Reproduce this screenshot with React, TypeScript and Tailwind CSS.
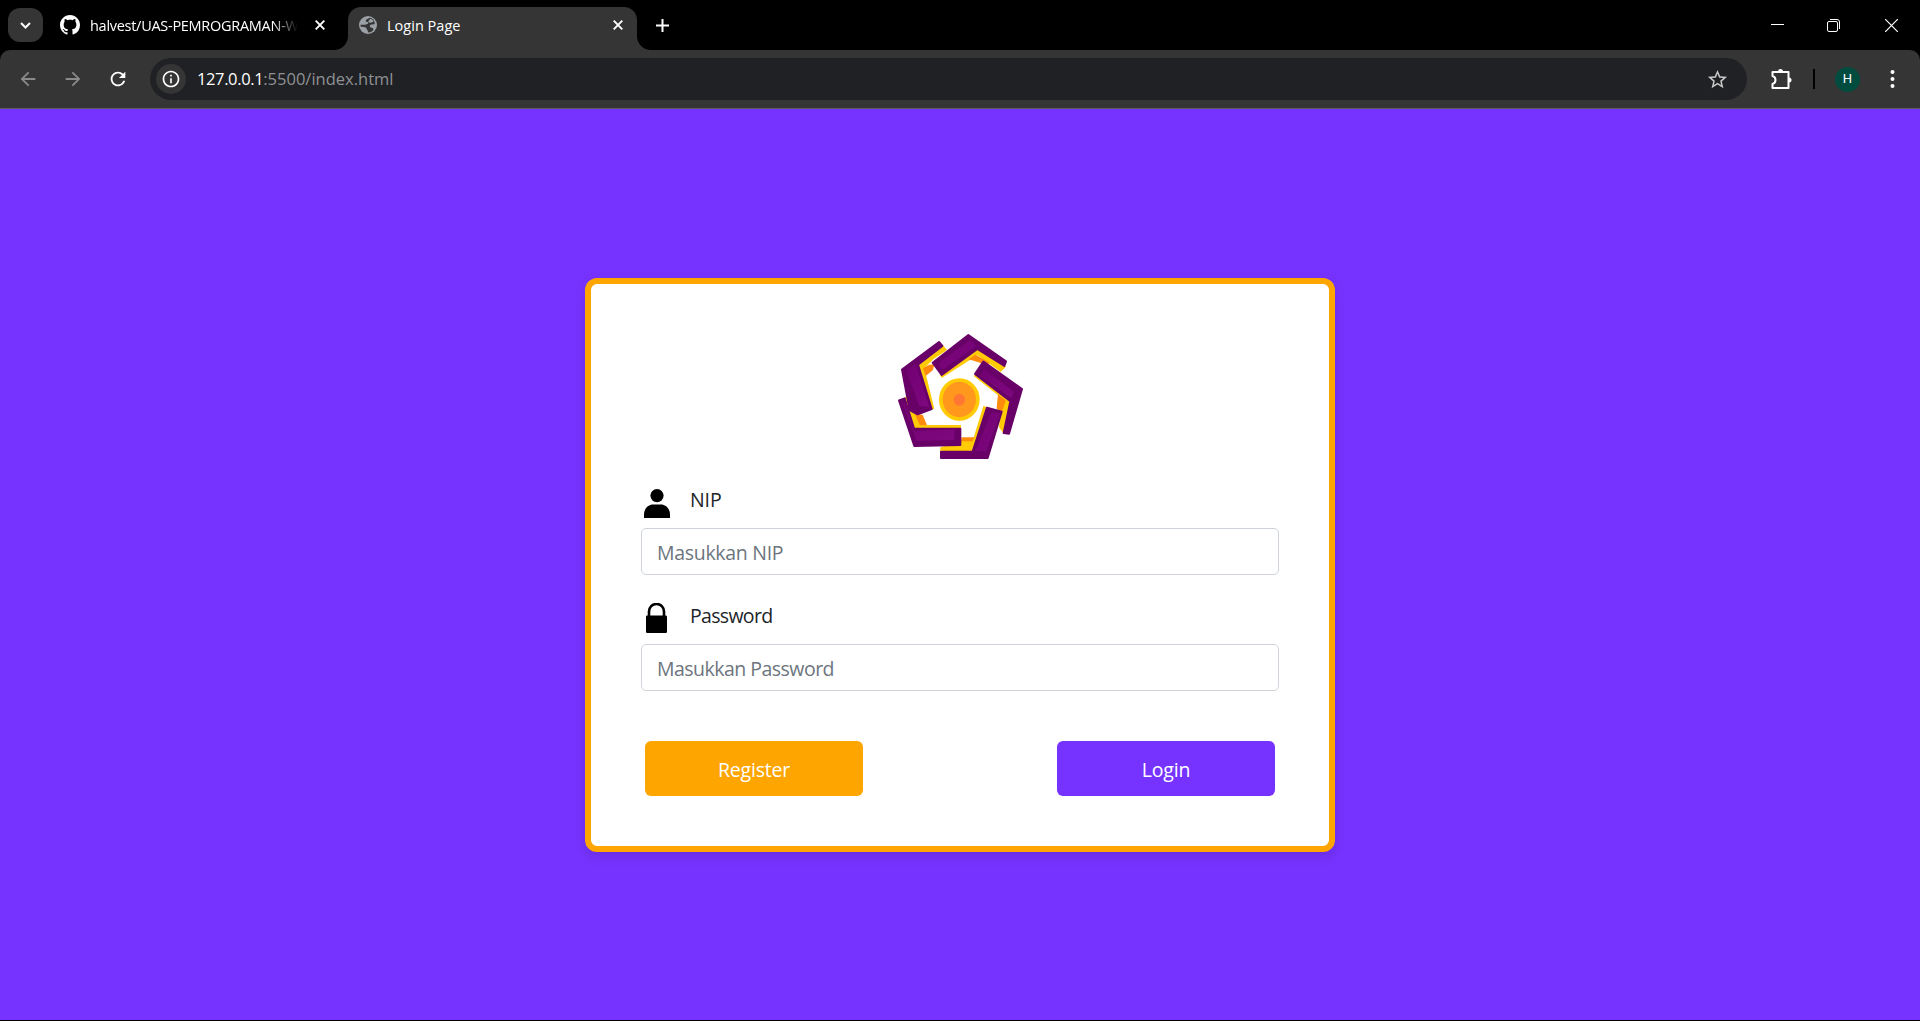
import React from "react";
import { MdArrowBack, MdArrowForward, MdRefresh, MdStarBorder, MdInfoOutline } from "react-icons/md";

function CloseIcon() {
  return (
    <svg width="10" height="10" viewBox="0 0 10 10" stroke="#fff" strokeWidth="1.9">
      <path d="M0.7 0.7 9.3 9.3M9.3 0.7 0.7 9.3" />
    </svg>
  );
}

function GithubIcon() {
  return (
    <svg className="ml-[17px]" width="20" height="20" viewBox="0 0 16 16" fill="#fff">
      <path d="M8 0C3.58 0 0 3.58 0 8c0 3.54 2.29 6.53 5.47 7.59.4.07.55-.17.55-.38 0-.19-.01-.82-.01-1.49-2.01.37-2.53-.49-2.69-.94-.09-.23-.48-.94-.82-1.13-.28-.15-.68-.52-.01-.53.63-.01 1.08.58 1.23.82.72 1.21 1.87.87 2.33.66.07-.52.28-.87.51-1.07-1.78-.2-3.64-.89-3.64-3.95 0-.87.31-1.59.82-2.15-.08-.2-.36-1.02.08-2.12 0 0 .67-.21 2.2.82.64-.18 1.32-.27 2-.27.68 0 1.36.09 2 .27 1.53-1.04 2.2-.82 2.2-.82.44 1.1.16 1.92.08 2.12.51.56.82 1.27.82 2.15 0 3.07-1.87 3.75-3.65 3.95.29.25.54.73.54 1.48 0 1.07-.01 1.93-.01 2.2 0 .21.15.46.55.38A8.013 8.013 0 0016 8c0-4.42-3.58-8-8-8z" />
    </svg>
  );
}

function GlobeIcon() {
  return (
    <svg width="18" height="18" viewBox="0 0 54 54">
      <circle cx="27" cy="27" r="27" fill="#9aa0a6" />
      <path
        d="M32 5c-4 3-11 4-12 9 0 4 5 3 8 5 1 5-5 6-9 7-5 1-9 0-14 0-1 3 0 5 1 7 5-1 11 0 15 2 3 2 1 5 5 8 1 2 0 4 1 6 6 1 12-2 16-7 1-4-1-6-5-7-5 0-6-3-5-7 2-4 8-2 14-3 1-7-3-15-9-18Z"
        fill="#353535"
      />
      <path d="M33 8c-1 4-6 6-5 10 3 3 8 3 12 1 2-2 4-3 4-4-3-4-6-6-11-7Z" fill="#9aa0a6" />
    </svg>
  );
}

function TabFlare({ side }: { side: "left" | "right" }) {
  return (
    <svg
      className={side === "left" ? "absolute bottom-0 -left-[14px]" : "absolute bottom-0 -right-[14px] -scale-x-100"}
      width="14"
      height="14"
      viewBox="0 0 14 14"
    >
      <path d="M14 0v14H0A14 14 0 0 0 14 0Z" fill="#353535" />
    </svg>
  );
}

function TabStrip() {
  return (
    <div className="flex h-[50px] items-end bg-black text-white">
      <div className="flex h-[50px] w-[348px] items-center pl-2">
        <div className="flex h-[34px] w-[35px] items-center justify-center rounded-[12px] bg-[#353535]">
          <svg width="11" height="7" viewBox="0 0 11 7" fill="none" stroke="#fff" strokeWidth="2">
            <path d="m1 1 4.5 4.5L10 1" />
          </svg>
        </div>
        <GithubIcon />
        <div className="ml-[10px] w-[210px] whitespace-nowrap pt-px text-[14.5px] tracking-[-0.28px] [mask-image:linear-gradient(to_right,black_87%,transparent_99%)]">
          halvest/UAS-PEMROGRAMAN-W
        </div>
        <div className="ml-[15px]">
          <CloseIcon />
        </div>
      </div>
      <div className="relative flex h-[43px] w-[289px] items-center rounded-t-[13px] bg-[#353535] pr-[14px] pb-[7px] pl-[11px]">
        <TabFlare side="left" />
        <GlobeIcon />
        <div className="ml-[10px] flex-1 pt-px text-[14.5px] tracking-[0.02px]">Login Page</div>
        <CloseIcon />
        <TabFlare side="right" />
      </div>
      <div className="flex h-[50px] flex-1 items-center pr-[22px] pl-[19px]">
        <svg width="13" height="13" viewBox="0 0 13 13" stroke="#fff" strokeWidth="2">
          <path d="M6.5 0v13M0 6.5h13" />
        </svg>
        <div className="ml-auto flex items-center">
          <svg width="13" height="13" viewBox="0 0 13 13" stroke="#fff">
            <path d="M0 5.500h13" />
          </svg>
          <svg className="ml-[43px]" width="13" height="13" viewBox="0 0 13 13" fill="none" stroke="#fff">
            <rect x="0.5" y="2.5" width="10" height="10" rx="1.5" />
            <path d="M3 0.5h7a2.5 2.5 0 0 1 2.5 2.5v7" />
          </svg>
          <svg className="ml-[45px]" width="13" height="13" viewBox="0 0 13 13" stroke="#fff" strokeWidth="1.2">
            <path d="m0 0 13 13M13 0 0 13" />
          </svg>
        </div>
      </div>
    </div>
  );
}

function Toolbar() {
  return (
    <div className="bg-black">
      <div className="flex h-[59px] items-center rounded-t-[10px] border-b border-[#5c5c5c] bg-[#353535] pr-[24px] pl-[17px]">
        <MdArrowBack className="size-[22px] text-[#8a8a8a]" />
        <MdArrowForward className="ml-[23px] size-[22px] text-[#8a8a8a]" />
        <MdRefresh className="ml-[23px] size-[22px] text-white" />
        <div className="ml-[21px] flex h-[42px] w-[1597px] items-center rounded-full bg-[#202124] pr-[18px] pl-[6px]">
          <div className="flex size-[30px] items-center justify-center rounded-full bg-[#353535]">
            <MdInfoOutline className="size-5 text-white" />
          </div>
          <div className="ml-[11px] flex-1 pt-px text-[16.5px] tracking-[0.01px] text-[#8f9194]">
            <span className="tracking-[-0.38px] text-white">127.0.0.1</span>:5500/index.html
          </div>
          <MdStarBorder className="size-[23px] text-[#c7c7c7]" />
        </div>
        <svg className="ml-[24px]" width="21" height="21" viewBox="0 0 21 21">
          <path
            d="M1.5 3h16v16h-16v-4c4-1 4-7 0-8Z"
            fill="none"
            stroke="#fff"
            strokeWidth="2"
            strokeLinejoin="round"
          />
          <path d="M7 2.500a2.5 2.5 0 0 1 5 0ZM18 8.500a2.5 2.5 0 0 1 0 5Z" fill="#fff" />
        </svg>
        <div className="ml-[21px] h-5 w-[2px] bg-black" />
        <div className="ml-[20px] flex size-[25px] items-center justify-center rounded-full bg-[#004d40] font-['Roboto',sans-serif] text-[13px] text-white">
          H
        </div>
        <svg className="ml-[30px]" width="5" height="18" viewBox="0 0 5 18" fill="#fff">
          <circle cx="2.5" cy="2" r="2" />
          <circle cx="2.5" cy="9" r="2" />
          <circle cx="2.5" cy="16" r="2" />
        </svg>
      </div>
    </div>
  );
}

function Logo() {
  return (
    <svg className="mx-auto shrink-0" width="160" height="150" viewBox="0 0 480 450" strokeLinejoin="round">
      <defs>
        <linearGradient id="plum" x1="0" y1="0" x2="1" y2="1">
          <stop offset="0" stopColor="#720072" />
          <stop offset="1" stopColor="#7e087f" />
        </linearGradient>
      </defs>
      <g fill="#ffcb05">
        <path d="M188 74 201 90 160 118 133 145 163 266 150 270 112 134Z" />
        <path d="M185 174 292 106 362 156 378 140 292 84 180 164Z" />
        <path d="M281 168 356 227 364 245 357 322 371 341 396 240 290 160Z" />
        <path d="M310 258 278 362 244 362 181 382V396H280L324 262Z" />
        <path d="M74 232 90 226 122 315H243V326H100Z" />
      </g>
      <g fill="#ff8a0c">
        <path d="M163 133 159 150 137 168 129 145 148 134Z" />
        <path d="M266 118 286 104 326 126 328 142 300 128Z" />
        <path d="M354 223 377 241 362 290 350 264Z" />
        <path d="M245 352H283L278 364H243Z" />
        <path d="M104 281 128 284 141 316H120Z" />
      </g>
      <g fill="#680068" stroke="#680068" strokeWidth="6">
        <path d="M66 149 177 66 187 78 114 134 155 267 113 283 89 270Z" />
        <path d="M158 128 265 45 378 124 373 138 292 87 185 165Z" />
        <path d="M285 162 310 125 426 207 387 341 371 339 391 244Z" />
        <path d="M321 263 365 275 323 414H183V395H278Z" />
        <path d="M57 241 74 235 102 326H241V375L103 378Z" />
      </g>
      <g fill="url(#plum)">
        <path d="M78 151 107 132 148 262 118 258Z" />
        <path d="M180 125 270 60 288 78 190 148 178 142Z" />
        <path d="M312 147 402 216 394 235 302 168Z" />
        <path d="M333 278 361 279 319 393 286 394Z" />
        <path d="M66 248 77 249 102 333 223 328V360L110 362Z" />
      </g>
      <ellipse cx="238" cy="238.500" rx="61" ry="64" fill="#ffcb05" />
      <ellipse cx="238" cy="238.500" rx="50" ry="53" fill="#ff981c" />
      <ellipse cx="238" cy="239" rx="17" ry="18" fill="#ff7732" />
    </svg>
  );
}

function UserIcon() {
  return (
    <svg width="26" height="29" viewBox="0 0 26 29">
      <circle cx="13" cy="6.600" r="6.600" />
      <path d="M0 29v-3.500C0 20 4 15.500 9 15.500h8c5 0 9 4.500 9 10V29Z" />
    </svg>
  );
}

function LockIcon() {
  return (
    <svg width="21" height="30" viewBox="0 0 21 30">
      <path d="M3 14V8.500a7.500 7.500 0 0 1 15 0V14" fill="none" stroke="#000" strokeWidth="2.600" />
      <rect y="12.500" width="21" height="17.500" rx="1.200" />
    </svg>
  );
}

const inputClass =
  "h-[47px] w-full rounded-[5px] border border-[#ced4da] bg-white px-[15px] pt-[2px] outline-none placeholder:text-[#6c757d]";

export default function App() {
  return (
    <div className="flex h-[1021px] w-[1920px] flex-col overflow-hidden border-b border-black bg-[#7633ff] font-['Open_Sans',sans-serif]">
      <TabStrip />
      <Toolbar />
      <main className="flex flex-1 items-start justify-center pt-[169px]">
        <form
          className="flex h-[574px] w-[750px] flex-col rounded-[12px] border-[6px] border-[#ffa500] bg-white px-[50px] pt-[36px] text-[19.5px] leading-[30px] text-[#212529] shadow-[0_5px_12px_rgba(0,0,0,0.12)]"
          onSubmit={(event) => event.preventDefault()}
        >
          <Logo />
          <div className="mt-[18px] flex h-[30px] items-center pl-[3px]">
            <UserIcon />
            <label htmlFor="nip" className="-mt-[6px] ml-[20px] tracking-[-0.1px]">
              NIP
            </label>
          </div>
          <input id="nip" placeholder="Masukkan NIP" className={inputClass + " mt-[10px] tracking-[-0.3px]"} />
          <div className="mt-[28px] flex h-[30px] items-center pl-[5px]">
            <LockIcon />
            <label htmlFor="password" className="-mt-[4px] ml-[23px] tracking-[-0.68px]">
              Password
            </label>
          </div>
          <input
            id="password"
            type="password"
            placeholder="Masukkan Password"
            className={inputClass + " mt-[11px] tracking-[-0.52px]"}
          />
          <div className="mt-[50px] flex justify-between px-1 tracking-[-0.22px] text-white">
            <button type="button" className="h-[55px] w-[218px] rounded-[6px] bg-[#ffa500] pt-[2px]">
              Register
            </button>
            <button type="submit" className="h-[55px] w-[218px] rounded-[6px] bg-[#7633ff] pt-[2px]">
              Login
            </button>
          </div>
        </form>
      </main>
    </div>
  );
}
